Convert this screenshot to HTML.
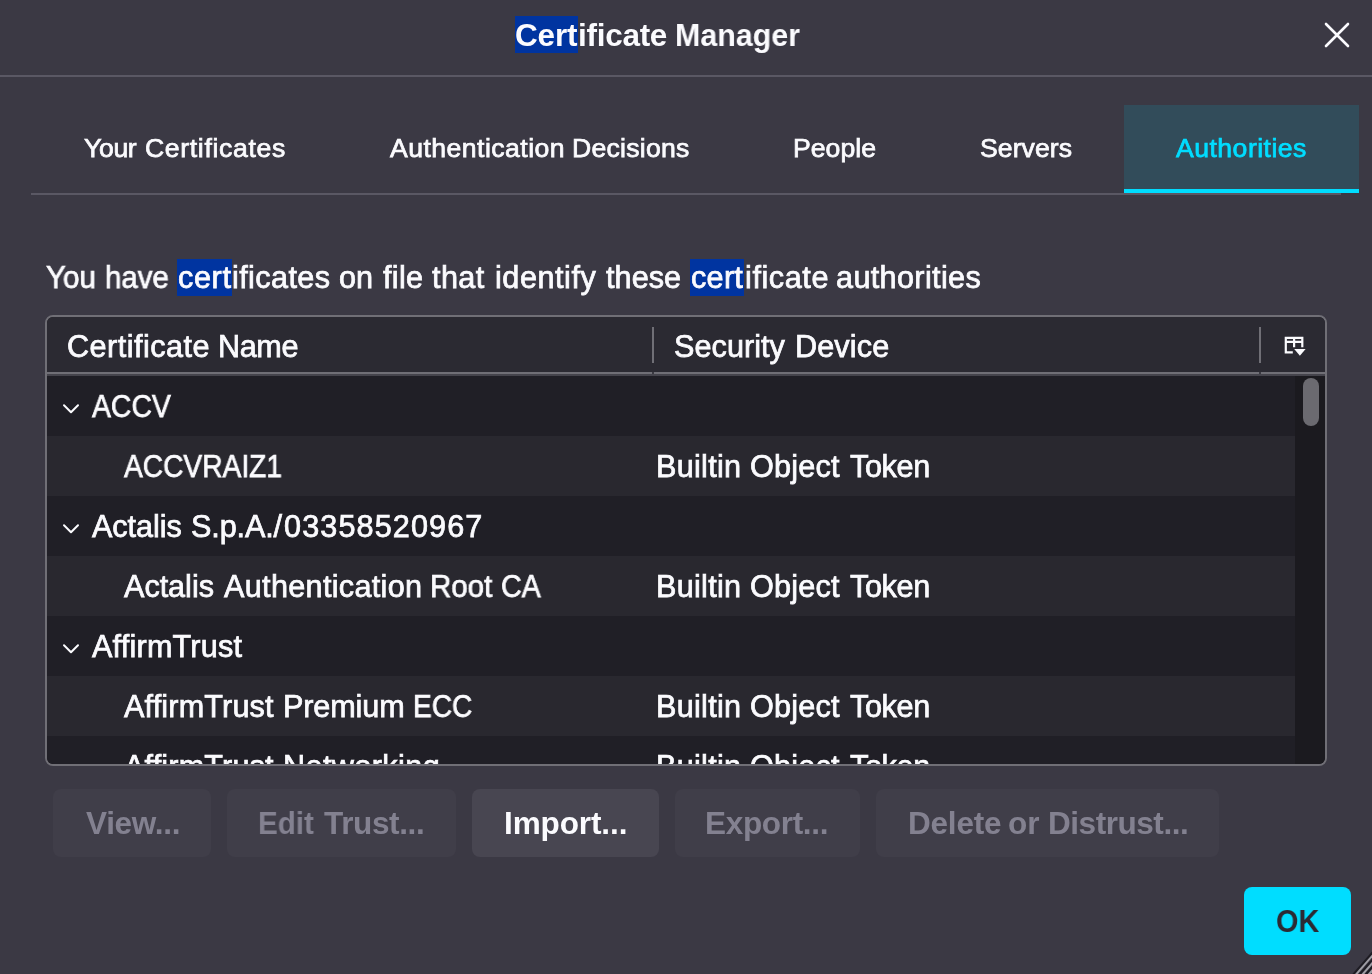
<!DOCTYPE html>
<html><head><meta charset="utf-8"><title>Certificate Manager</title>
<style>
html,body{margin:0;padding:0}
body{width:1372px;height:974px;overflow:hidden;background:#3b3944;position:relative;font-family:"Liberation Sans",sans-serif;color:#fbfbfe}
.a{position:absolute}
.t{position:absolute;white-space:pre;line-height:40px;height:40px;will-change:transform;-webkit-text-stroke:0.75px currentColor}
.b{-webkit-text-stroke:0}
.row{position:absolute;left:0;width:1248px;height:60px}
.btn{position:absolute;top:789px;height:68px;border-radius:8px;background:#403e49}
</style></head><body>
<div class="a" style="left:515px;top:16px;width:63px;height:37px;background:#0034a0"></div>
<svg class="a" style="left:1321px;top:19px" width="32" height="32" viewBox="0 0 32 32"><path d="M5 5 L27 27 M27 5 L5 27" stroke="#fbfbfe" stroke-width="2.6" stroke-linecap="round" fill="none"/></svg>
<div class="a" style="left:0;top:75px;width:1372px;height:2px;background:#5a5864"></div>
<div class="a" style="left:31px;top:193px;width:1310px;height:2px;background:#5a5864"></div>
<div class="a" style="left:1124px;top:105px;width:235px;height:84px;background:#324c5a;border-bottom:4px solid #00ddff"></div>
<div class="a" style="left:177px;top:259px;width:55px;height:37px;background:#0034a0"></div>
<div class="a" style="left:690px;top:259px;width:54px;height:37px;background:#0034a0"></div>
<div class="a" id="tree" style="left:45px;top:315px;width:1278px;height:447px;border:2px solid #706f76;border-radius:8px;background:#201f26;overflow:hidden">
<div class="a" style="left:0;top:0;width:1278px;height:55px;background:#2b2a32"></div>
<div class="a" style="left:0;top:55px;width:1278px;height:2px;background:#706f76"></div>
<div class="a" style="left:0;top:57px;width:1278px;height:2px;background:#45444c"></div>
<div class="a" style="left:605px;top:10px;width:2px;height:36px;background:#706f76"></div>
<div class="a" style="left:605px;top:55px;width:2px;height:2px;background:#3a3941"></div>
<div class="a" style="left:1212px;top:10px;width:2px;height:36px;background:#706f76"></div>
<div class="a" style="left:1212px;top:55px;width:2px;height:2px;background:#3a3941"></div>
<svg class="a" style="left:1236px;top:18px" width="24" height="22" viewBox="0 0 24 22">
<path d="M9.8 17.4 H2.8 V2.9 H19.3 V12.3 M2.8 6.9 H19.3 M11.1 2.9 V12.3" stroke="#fbfbfe" stroke-width="2.2" fill="none" stroke-linejoin="miter" stroke-linecap="butt"/>
<path d="M11.2 13.9 H22.6 L16.9 20.8 Z" fill="#fbfbfe"/>
</svg>
<div class="row" style="top:59px;background:#201f26"></div>
<div class="row" style="top:119px;background:#29282f"></div>
<div class="row" style="top:179px;background:#201f26"></div>
<div class="row" style="top:239px;background:#29282f"></div>
<div class="row" style="top:299px;background:#201f26"></div>
<div class="row" style="top:359px;background:#29282f"></div>
<div class="row" style="top:419px;background:#201f26"></div>
<svg class="a" style="left:14px;top:85.0px" width="20" height="14" viewBox="0 0 20 14"><path d="M3 3.2 L10 10.2 L17 3.2" stroke="#fbfbfe" stroke-width="2" fill="none" stroke-linecap="round" stroke-linejoin="round"/></svg>
<svg class="a" style="left:14px;top:205.0px" width="20" height="14" viewBox="0 0 20 14"><path d="M3 3.2 L10 10.2 L17 3.2" stroke="#fbfbfe" stroke-width="2" fill="none" stroke-linecap="round" stroke-linejoin="round"/></svg>
<svg class="a" style="left:14px;top:325.0px" width="20" height="14" viewBox="0 0 20 14"><path d="M3 3.2 L10 10.2 L17 3.2" stroke="#fbfbfe" stroke-width="2" fill="none" stroke-linecap="round" stroke-linejoin="round"/></svg>
<div class="a" style="left:1248px;top:59px;width:30px;height:400px;background:#1b1a1f"></div>
<div class="a" style="left:1256px;top:61px;width:16px;height:48px;border-radius:8px;background:#6b6a70"></div>
<div class="t" id="r7_0" style="left:77.38px;top:428.68px;font-size:30.60px;letter-spacing:0.170px;color:#fbfbfe">AffirmTrust</div>
<div class="t" id="r7_1" style="left:235.92px;top:428.68px;font-size:30.60px;letter-spacing:0.410px;color:#fbfbfe">Networking</div>
<div class="t" id="b7_0" style="left:608.56px;top:428.68px;font-size:30.60px;letter-spacing:0.280px;color:#fbfbfe">Builtin</div>
<div class="t" id="b7_1" style="left:702.58px;top:428.68px;font-size:30.60px;letter-spacing:0.240px;color:#fbfbfe">Object</div>
<div class="t" id="b7_2" style="left:803.38px;top:428.68px;font-size:30.60px;letter-spacing:-0.357px;color:#fbfbfe">Token</div>
</div>
<div class="btn" style="left:53px;width:158px;background:#403e49"></div>
<div class="btn" style="left:227px;width:229px;background:#403e49"></div>
<div class="btn" style="left:472px;width:187px;background:#484651"></div>
<div class="btn" style="left:675px;width:185px;background:#403e49"></div>
<div class="btn" style="left:876px;width:343px;background:#403e49"></div>
<div class="a" style="left:1244px;top:887px;width:107px;height:68px;border-radius:8px;background:#00ddff"></div>
<svg class="a" style="left:1342px;top:944px" width="30" height="30" viewBox="1342 944 30 30"><path d="M1350.65 977.45 L1375.00 949.45" stroke="#1e1c23" stroke-width="1.95" fill="none"/><path d="M1353.45 977.45 L1375.00 952.67" stroke="#a09ea5" stroke-width="1.95" fill="none"/><path d="M1356.95 977.45 L1375.00 956.69" stroke="#1e1c23" stroke-width="1.95" fill="none"/><path d="M1359.95 977.45 L1375.00 960.14" stroke="#a09ea5" stroke-width="1.95" fill="none"/><path d="M1363.15 977.45 L1375.00 963.82" stroke="#1e1c23" stroke-width="1.95" fill="none"/><path d="M1366.10 977.45 L1375.00 967.21" stroke="#a09ea5" stroke-width="1.95" fill="none"/></svg>
<div class="t b" id="ti_0" style="left:515.44px;top:14.59px;font-size:31.50px;letter-spacing:-0.183px;color:#fbfbfe;font-weight:700">Cert</div>
<div class="t b" id="ti_1" style="left:577.78px;top:14.59px;font-size:31.50px;letter-spacing:-0.276px;color:#fbfbfe;font-weight:700">ificate</div>
<div class="t b" id="ti_2" style="left:675.20px;top:14.59px;font-size:31.50px;letter-spacing:0.000px;color:#fbfbfe;font-weight:700;transform:scaleX(0.9653);transform-origin:0 0">Manager</div>
<div class="t" id="tab1_0" style="left:84.09px;top:127.78px;font-size:26.60px;letter-spacing:-0.335px;color:#fbfbfe">Your</div>
<div class="t" id="tab1_1" style="left:144.68px;top:127.78px;font-size:26.60px;letter-spacing:0.657px;color:#fbfbfe">Certificates</div>
<div class="t" id="tab2_0" style="left:389.98px;top:127.78px;font-size:26.60px;letter-spacing:0.466px;color:#fbfbfe">Authentication</div>
<div class="t" id="tab2_1" style="left:571.56px;top:127.78px;font-size:26.60px;letter-spacing:0.261px;color:#fbfbfe">Decisions</div>
<div class="t" id="tab3" style="left:792.84px;top:127.78px;font-size:26.60px;letter-spacing:0.046px;color:#fbfbfe">People</div>
<div class="t" id="tab4" style="left:980.06px;top:127.78px;font-size:26.60px;letter-spacing:0.058px;color:#fbfbfe">Servers</div>
<div class="t" id="tab5" style="left:1176.04px;top:127.78px;font-size:26.60px;letter-spacing:0.476px;color:#00ddff">Authorities</div>
<div class="t" id="d_0" style="left:45.74px;top:257.20px;font-size:30.60px;letter-spacing:0.000px;color:#fbfbfe;transform:scaleX(0.9685);transform-origin:0 0">You</div>
<div class="t" id="d_1" style="left:104.50px;top:257.20px;font-size:30.60px;letter-spacing:0.000px;color:#fbfbfe;transform:scaleX(0.9625);transform-origin:0 0">have</div>
<div class="t" id="d_2" style="left:178.20px;top:257.20px;font-size:30.60px;letter-spacing:0.640px;color:#fbfbfe">cert</div>
<div class="t" id="d_3" style="left:232.14px;top:257.20px;font-size:30.60px;letter-spacing:0.407px;color:#fbfbfe">ificates</div>
<div class="t" id="d_4" style="left:339.34px;top:257.20px;font-size:30.60px;letter-spacing:0.101px;color:#fbfbfe">on</div>
<div class="t" id="d_5" style="left:382.96px;top:257.20px;font-size:30.60px;letter-spacing:0.308px;color:#fbfbfe">file</div>
<div class="t" id="d_6" style="left:431.88px;top:257.20px;font-size:30.60px;letter-spacing:0.395px;color:#fbfbfe">that</div>
<div class="t" id="d_7" style="left:495.00px;top:257.20px;font-size:30.60px;letter-spacing:0.548px;color:#fbfbfe">identify</div>
<div class="t" id="d_8" style="left:605.74px;top:257.20px;font-size:30.60px;letter-spacing:0.061px;color:#fbfbfe">these</div>
<div class="t" id="d_9" style="left:690.62px;top:257.20px;font-size:30.60px;letter-spacing:0.285px;color:#fbfbfe">cert</div>
<div class="t" id="d_10" style="left:744.50px;top:257.20px;font-size:30.60px;letter-spacing:0.588px;color:#fbfbfe">ificate</div>
<div class="t" id="d_11" style="left:836.47px;top:257.20px;font-size:30.60px;letter-spacing:0.363px;color:#fbfbfe">authorities</div>
<div class="t" id="h1_0" style="left:67.08px;top:325.68px;font-size:30.60px;letter-spacing:0.470px;color:#fbfbfe">Certificate</div>
<div class="t" id="h1_1" style="left:218.20px;top:325.68px;font-size:30.60px;letter-spacing:-0.388px;color:#fbfbfe">Name</div>
<div class="t" id="h2_0" style="left:673.57px;top:325.68px;font-size:30.60px;letter-spacing:0.057px;color:#fbfbfe">Security</div>
<div class="t" id="h2_1" style="left:795.42px;top:325.68px;font-size:30.60px;letter-spacing:0.131px;color:#fbfbfe">Device</div>
<div class="t" id="r1" style="left:91.69px;top:386.79px;font-size:31.30px;letter-spacing:0.000px;color:#fbfbfe;transform:scaleX(0.9075);transform-origin:0 0">ACCV</div>
<div class="t" id="r2" style="left:124.04px;top:446.79px;font-size:31.30px;letter-spacing:0.000px;color:#fbfbfe;transform:scaleX(0.8996);transform-origin:0 0">ACCVRAIZ1</div>
<div class="t" id="r3_0" style="left:92.38px;top:505.68px;font-size:30.60px;letter-spacing:-0.045px;color:#fbfbfe">Actalis</div>
<div class="t" id="r3_1" style="left:190.71px;top:505.68px;font-size:30.60px;letter-spacing:-0.134px;color:#fbfbfe">S.p.A./</div>
<div class="t" id="r3_2" style="left:283.79px;top:505.68px;font-size:30.60px;letter-spacing:1.116px;color:#fbfbfe">03358520967</div>
<div class="t" id="r4_0" style="left:124.16px;top:565.68px;font-size:30.60px;letter-spacing:-0.026px;color:#fbfbfe">Actalis</div>
<div class="t" id="r4_1" style="left:223.88px;top:565.68px;font-size:30.60px;letter-spacing:0.320px;color:#fbfbfe">Authentication</div>
<div class="t" id="r4_2" style="left:429.92px;top:565.68px;font-size:30.60px;letter-spacing:0.000px;color:#fbfbfe;transform:scaleX(0.9654);transform-origin:0 0">Root</div>
<div class="t" id="r4_3" style="left:501.22px;top:565.68px;font-size:30.60px;letter-spacing:0.000px;color:#fbfbfe;transform:scaleX(0.9373);transform-origin:0 0">CA</div>
<div class="t" id="r5" style="left:92.38px;top:625.68px;font-size:30.60px;letter-spacing:0.208px;color:#fbfbfe">AffirmTrust</div>
<div class="t" id="r6_0" style="left:124.38px;top:685.68px;font-size:30.60px;letter-spacing:0.170px;color:#fbfbfe">AffirmTrust</div>
<div class="t" id="r6_1" style="left:282.92px;top:685.68px;font-size:30.60px;letter-spacing:-0.122px;color:#fbfbfe">Premium</div>
<div class="t" id="r6_2" style="left:412.89px;top:685.68px;font-size:30.60px;letter-spacing:0.000px;color:#fbfbfe;transform:scaleX(0.9175);transform-origin:0 0">ECC</div>
<div class="t" id="b2_0" style="left:655.56px;top:445.68px;font-size:30.60px;letter-spacing:0.280px;color:#fbfbfe">Builtin</div>
<div class="t" id="b2_1" style="left:749.58px;top:445.68px;font-size:30.60px;letter-spacing:0.240px;color:#fbfbfe">Object</div>
<div class="t" id="b2_2" style="left:850.38px;top:445.68px;font-size:30.60px;letter-spacing:-0.357px;color:#fbfbfe">Token</div>
<div class="t" id="b4_0" style="left:655.56px;top:565.68px;font-size:30.60px;letter-spacing:0.280px;color:#fbfbfe">Builtin</div>
<div class="t" id="b4_1" style="left:749.58px;top:565.68px;font-size:30.60px;letter-spacing:0.240px;color:#fbfbfe">Object</div>
<div class="t" id="b4_2" style="left:850.38px;top:565.68px;font-size:30.60px;letter-spacing:-0.357px;color:#fbfbfe">Token</div>
<div class="t" id="b6_0" style="left:655.56px;top:685.68px;font-size:30.60px;letter-spacing:0.280px;color:#fbfbfe">Builtin</div>
<div class="t" id="b6_1" style="left:749.58px;top:685.68px;font-size:30.60px;letter-spacing:0.240px;color:#fbfbfe">Object</div>
<div class="t" id="b6_2" style="left:850.38px;top:685.68px;font-size:30.60px;letter-spacing:-0.357px;color:#fbfbfe">Token</div>
<div class="t b" id="bt1" style="left:85.74px;top:803.09px;font-size:31.50px;letter-spacing:-0.311px;color:#838190;font-weight:700">View...</div>
<div class="t b" id="bt2_0" style="left:258.38px;top:803.09px;font-size:31.50px;letter-spacing:0.000px;color:#838190;font-weight:700;transform:scaleX(0.9389);transform-origin:0 0">Edit</div>
<div class="t b" id="bt2_1" style="left:324.46px;top:803.09px;font-size:31.50px;letter-spacing:-0.364px;color:#838190;font-weight:700">Trust...</div>
<div class="t b" id="bt3" style="left:503.92px;top:803.09px;font-size:31.50px;letter-spacing:-0.104px;color:#fbfbfe;font-weight:700">Import...</div>
<div class="t b" id="bt4" style="left:705.34px;top:803.09px;font-size:31.50px;letter-spacing:-0.322px;color:#838190;font-weight:700">Export...</div>
<div class="t b" id="bt5_0" style="left:907.56px;top:803.09px;font-size:31.50px;letter-spacing:-0.203px;color:#838190;font-weight:700">Delete</div>
<div class="t b" id="bt5_1" style="left:1008.08px;top:803.09px;font-size:31.50px;letter-spacing:0.113px;color:#838190;font-weight:700">or</div>
<div class="t b" id="bt5_2" style="left:1047.64px;top:803.09px;font-size:31.50px;letter-spacing:-0.451px;color:#838190;font-weight:700">Distrust...</div>
<div class="t b" id="ok" style="left:1276.08px;top:900.99px;font-size:31.50px;letter-spacing:0.000px;color:#2b2a33;font-weight:700;transform:scaleX(0.9154);transform-origin:0 0">OK</div>
</body></html>
